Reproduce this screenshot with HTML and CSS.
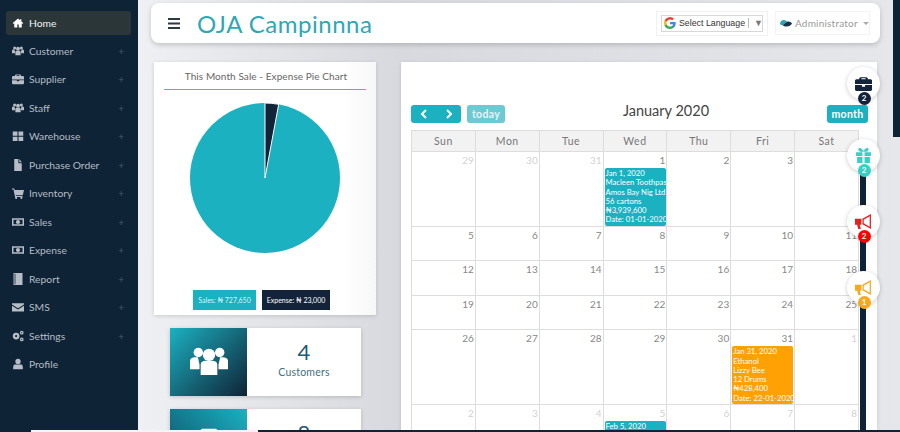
FILE: index.html
```html
<!DOCTYPE html>
<html lang="en">
<head>
    <meta charset="UTF-8">
    <meta name="viewport" content="width=device-width, initial-scale=1.0">
    <title>OJA Campinnna</title>
    <link rel="stylesheet" href="styles.css">
</head>
<body>
    <svg class="icon-defs" aria-hidden="true">
        <symbol id="i-home" viewBox="0 0 16 16"><path d="M8 2 1 8l1 1.200 1-.8V14h4v-4h2v4h4V8.400l1 .8L15 8l-2.500-2.100V3h-2v1.200z"/></symbol>
        <symbol id="i-users" viewBox="0 0 16 16"><circle cx="3.500" cy="4" r="2"/><circle cx="12.500" cy="4" r="2"/><circle cx="8" cy="5" r="2.600"/><path d="M0 7.500c0-1 1-1.500 2-1.500h1.300L4 9v2H0zM16 7.500c0-1-1-1.500-2-1.500h-1.300L12 9v2h4zM4.500 9c0-1 1-1.500 2-1.500h3c1 0 2 .5 2 1.500v4.500h-7z"/></symbol>
        <symbol id="i-case" viewBox="0 0 16 16"><path d="M5 2h6l1 1v1h3l1 1v3.500H0V5l1-1h3V3zm1 1v1h4V3zM0 9.500h6.500V11h3V9.500H16V14l-1 1H1l-1-1z"/></symbol>
        <symbol id="i-grid" viewBox="0 0 16 16"><path d="M1 2h6.300v5.500H1zM8.700 2H15v5.500H8.700zM1 9h6.300v5.500H1zM8.700 9H15v5.500H8.700z"/></symbol>
        <symbol id="i-file" viewBox="0 0 16 16"><path d="M3 0h5.500v5.500H13V16H3zM9.800 0 13 4.200H9.800z"/></symbol>
        <symbol id="i-cart" viewBox="0 0 16 16"><path d="M0 2h3l.5 2H16l-1.500 6.500H5l.3 1.300H14v1.400H4L2 3.400H0z"/><circle cx="5.500" cy="14.500" r="1.400"/><circle cx="12.500" cy="14.500" r="1.400"/></symbol>
        <symbol id="i-money" viewBox="0 0 16 16"><path fill-rule="evenodd" d="M0 3h16v10H0zm2 2v6h12V5zM8 5.200a2.800 2.800 0 1 1 0 5.600 2.800 2.800 0 0 1 0-5.600z"/></symbol>
        <symbol id="i-book" viewBox="0 0 16 16"><path d="M2 0h12v16H2zM3.500 1v14h1V1z"/></symbol>
        <symbol id="i-mail" viewBox="0 0 16 16"><path d="M0 3h16v1.500L8 9.500 0 4.500zM0 6.300l8 5 8-5V14H0z"/></symbol>
        <symbol id="i-cogs" viewBox="0 0 16 16"><path fill-rule="evenodd" d="M5.500 3.500a4.500 4.500 0 1 1 0 9 4.500 4.500 0 0 1 0-9zm0 3a1.500 1.500 0 1 0 0 3 1.500 1.500 0 0 0 0-3zM13 1a2.500 2.500 0 1 1 0 5 2.500 2.500 0 0 1 0-5zm0 1.700a.8.800 0 1 0 0 1.600.8.800 0 0 0 0-1.600zM13 10a2.500 2.500 0 1 1 0 5 2.500 2.500 0 0 1 0-5zm0 1.700a.8.800 0 1 0 0 1.600.8.800 0 0 0 0-1.600z"/></symbol>
        <symbol id="i-user" viewBox="0 0 16 16"><circle cx="8" cy="4.500" r="3.500"/><path d="M3.500 8.500h9c1.500 0 2 2 2 6.500h-13c0-4.500.5-6.500 2-6.500z"/></symbol>
        <symbol id="i-gift" viewBox="0 0 16 16"><path d="M1 5h6v3.500H1zM9 5h6v3.500H9zM2 9.500h5V15H2zM9 9.500h5V15H9zM4 1c1.500-.5 3 1 4 3 1-2 2.500-3.500 4-3 1.500.7.800 3-1 3.500H5C3.200 4 2.500 1.700 4 1z"/></symbol>
        <symbol id="i-horn" viewBox="0 0 16 16"><path d="M0 5.500h6V11H4.500l1 4H3l-1-4H0zM7 5.500l8-4.500v14l-8-4.500zm1.200.8v3.400l5.600 3.200V3.100z"/></symbol>
    </svg>

    <aside class="sidebar">
        <ul class="side-menu">
            <li class="side-item active"><svg class="side-icon"><use href="#i-home"/></svg>Home</li>
            <li class="side-item"><svg class="side-icon"><use href="#i-users"/></svg>Customer<span class="plus">+</span></li>
            <li class="side-item"><svg class="side-icon"><use href="#i-case"/></svg>Supplier<span class="plus">+</span></li>
            <li class="side-item"><svg class="side-icon"><use href="#i-users"/></svg>Staff<span class="plus">+</span></li>
            <li class="side-item"><svg class="side-icon"><use href="#i-grid"/></svg>Warehouse<span class="plus">+</span></li>
            <li class="side-item"><svg class="side-icon"><use href="#i-file"/></svg>Purchase Order<span class="plus">+</span></li>
            <li class="side-item"><svg class="side-icon"><use href="#i-cart"/></svg>Inventory<span class="plus">+</span></li>
            <li class="side-item"><svg class="side-icon"><use href="#i-money"/></svg>Sales<span class="plus">+</span></li>
            <li class="side-item"><svg class="side-icon"><use href="#i-money"/></svg>Expense<span class="plus">+</span></li>
            <li class="side-item"><svg class="side-icon"><use href="#i-book"/></svg>Report<span class="plus">+</span></li>
            <li class="side-item"><svg class="side-icon"><use href="#i-mail"/></svg>SMS<span class="plus">+</span></li>
            <li class="side-item"><svg class="side-icon"><use href="#i-cogs"/></svg>Settings<span class="plus">+</span></li>
            <li class="side-item"><svg class="side-icon"><use href="#i-user"/></svg>Profile</li>
        </ul>
    </aside>

    <main class="main">
        <header class="topbar">
            <svg class="burger" viewBox="0 0 12 11"><path d="M0 0h12v2H0zM0 4.500h12v2H0zM0 9h12v2H0z"/></svg>
            <div class="brand">OJA Campinnna</div>
            <div class="lang-box">
                <div class="lang-select">
                    <svg class="g-logo" viewBox="0 0 18 18">
                        <path fill="#4285f4" d="M17.600 9.200c0-.6-.1-1.200-.2-1.800H9v3.400h4.800a4.100 4.100 0 0 1-1.800 2.700v2.200h2.900c1.700-1.600 2.700-3.900 2.700-6.500z"/>
                        <path fill="#34a853" d="M9 18c2.400 0 4.500-.8 5.900-2.200L12 13.500c-.8.500-1.800.9-3 .9-2.300 0-4.300-1.600-5-3.700H1v2.300A9 9 0 0 0 9 18z"/>
                        <path fill="#fbbc05" d="M4 10.700a5.400 5.400 0 0 1 0-3.400V5H1a9 9 0 0 0 0 8z"/>
                        <path fill="#ea4335" d="M9 3.600c1.300 0 2.500.5 3.400 1.300L15 2.400A9 9 0 0 0 1 5l3 2.300c.7-2.100 2.700-3.700 5-3.700z"/>
                    </svg>
                    <span class="lang-text">Select Language</span>
                    <span class="lang-arrow">▼</span>
                </div>
            </div>
            <div class="user-box">
                <svg class="user-logo" viewBox="0 0 14 9"><path fill="#2aa7b3" d="M0 5c0-2 2-4 4.500-4C6 1 7.500 2 8 3L3 7C1 7 0 6 0 5z"/><path fill="#17324a" d="M8 3c2-1 5 0 6 2-1 2-4 3.500-6 3.500-2 0-4-.5-5-1.500z"/></svg>
                <span>Administrator</span>
                <span class="caret"></span>
            </div>
        </header>

        <div class="content">
            <div class="left-col">
                <section class="pie-card">
                    <h2 class="pie-title">This Month Sale - Expense Pie Chart</h2>
                    <svg class="pie" viewBox="0 0 150 150">
                        <circle cx="75" cy="75" r="75" fill="#1bb1c1"/>
                        <path d="M75 75 75 0A75 75 0 0 1 88.700 1.300z" fill="#13233a" stroke="#fff" stroke-width="1"/>
                    </svg>
                    <div class="legend">
                        <span class="legend-item sales">Sales: ₦ 727,650</span>
                        <span class="legend-item expense">Expense: ₦ 23,000</span>
                    </div>
                </section>

                <section class="stat-card">
                    <div class="stat-icon"><svg class="stat-svg"><use href="#i-users"/></svg></div>
                    <div class="stat-body">
                        <div class="stat-num">4</div>
                        <div class="stat-label">Customers</div>
                    </div>
                </section>
                <section class="stat-card">
                    <div class="stat-icon flip"><svg class="stat-svg"><use href="#i-case"/></svg></div>
                    <div class="stat-body">
                        <div class="stat-num">8</div>
                        <div class="stat-label">Suppliers</div>
                    </div>
                </section>
            </div>

            <section class="cal-card">
                <div class="cal-toolbar">
                    <div class="btn-group">
                        <button class="cal-btn">
                            <svg class="chev" viewBox="0 0 8 10"><path d="M6 1 2 5l4 4"/></svg>
                        </button>
                        <button class="cal-btn">
                            <svg class="chev" viewBox="0 0 8 10"><path d="M2 1l4 4-4 4"/></svg>
                        </button>
                    </div>
                    <button class="cal-btn today">today</button>
                    <h2 class="cal-title">January 2020</h2>
                    <button class="cal-btn month">month</button>
                </div>

                <table class="calendar">
                    <thead>
                        <tr><th>Sun</th><th>Mon</th><th>Tue</th><th>Wed</th><th>Thu</th><th>Fri</th><th>Sat</th></tr>
                    </thead>
                    <tbody>
                        <tr class="tall">
                            <td class="dim">29</td><td class="dim">30</td><td class="dim">31</td>
                            <td>1
                                <div class="event teal">Jan 1, 2020<br>Macleen Toothpaste<br>Amos Bay Nig Ltd<br>56 cartons<br>₦3,939,600<br>Date: 01-01-2020</div>
                            </td>
                            <td>2</td><td>3</td><td>4</td>
                        </tr>
                        <tr><td>5</td><td>6</td><td>7</td><td>8</td><td>9</td><td>10</td><td>11</td></tr>
                        <tr><td>12</td><td>13</td><td>14</td><td>15</td><td>16</td><td>17</td><td>18</td></tr>
                        <tr><td>19</td><td>20</td><td>21</td><td>22</td><td>23</td><td>24</td><td>25</td></tr>
                        <tr class="tall">
                            <td>26</td><td>27</td><td>28</td><td>29</td><td>30</td>
                            <td>31
                                <div class="event orange">Jan 31, 2020<br>Ethanol<br>Lizzy Bee<br>12 Drums<br>₦428,400<br>Date: 22-01-2020</div>
                            </td>
                            <td class="dim">1</td>
                        </tr>
                        <tr class="tall">
                            <td class="dim">2</td><td class="dim">3</td><td class="dim">4</td>
                            <td class="dim">5
                                <div class="event teal">Feb 5, 2020</div>
                            </td>
                            <td class="dim">6</td><td class="dim">7</td><td class="dim">8</td>
                        </tr>
                    </tbody>
                </table>
            </section>
        </div>
    </main>

    <!-- 右側のタイムライン -->
    <div class="timeline">
        <div class="tl-node node-1"><svg class="tl-icon ink"><use href="#i-case"/></svg><span class="tl-badge bg-ink">2</span></div>
        <div class="tl-node node-2"><svg class="tl-icon aqua"><use href="#i-gift"/></svg><span class="tl-badge bg-aqua">2</span></div>
        <div class="tl-node node-3"><svg class="tl-icon red"><use href="#i-horn"/></svg><span class="tl-badge bg-red">2</span></div>
        <div class="tl-node node-4"><svg class="tl-icon amber"><use href="#i-horn"/></svg><span class="tl-badge bg-amber">1</span></div>
    </div>

    <div class="corner-strip"></div>
    <div class="bottom-line"></div>
</body>
</html>
```

FILE: styles.css
```css
* {
    box-sizing: border-box;
}
html, body {
    height: 432px;
}
body {
    margin: 0;
    display: flex;
    overflow: hidden;
    position: relative;
    font-family: "Lato", "Noto Sans", sans-serif;
    color: #555;
}
.icon-defs {
    display: none;
}

/* sidebar */
.sidebar {
    flex: 0 0 138px;
    background-color: #0f2336;
}
.side-menu {
    list-style: none;
    margin: 0;
    padding: 9px 7px 0 6px;
}
.side-item {
    height: 28.5px;
    display: flex;
    align-items: center;
    padding-left: 6px;
    padding-bottom: 2px;
    font-size: 10.3px;
    color: #b4bcc4;
    position: relative;
}
.side-item.active {
    height: 24px;
    margin: 2px 0 2.5px;
    padding-bottom: 1px;
    background-color: #2b3639;
    border-radius: 3px;
    color: #f2f4f5;
}
.side-icon {
    width: 12px;
    height: 12px;
    margin-right: 5px;
    fill: #b6bdc4;
    flex: none;
}
.active .side-icon {
    fill: #fff;
}
.plus {
    position: absolute;
    right: 7px;
    font-size: 10px;
    color: #4a5a69;
}

/* main */
.main {
    flex: 1;
    min-width: 0;
    padding: 3px 20px 0 13px;
    background: linear-gradient(90deg, #eef0f3 0, #d8d9de 260px, #e6e7eb 100%);
}
.topbar {
    height: 40px;
    background-color: #fff;
    border-radius: 8px;
    box-shadow: 0 2px 5px rgba(0,0,0,0.18);
    display: flex;
    align-items: center;
    padding: 0 10px 0 17px;
}
.burger {
    width: 12px;
    height: 11px;
    fill: #2d3a42;
    flex: none;
}
.brand {
    margin-left: 17px;
    font-size: 24px;
    letter-spacing: 0.5px;
    color: #2ea8b4;
    flex: 1;
}
.lang-box {
    width: 112px;
    height: 25px;
    border: 1px solid #f1f1f1;
    padding: 3px 4px;
}
.lang-select {
    height: 17px;
    border: 1px solid #d8d8d8;
    display: flex;
    align-items: center;
    padding-left: 2px;
    font-family: "Liberation Sans", sans-serif;
    font-size: 8.8px;
    color: #333;
}
.g-logo {
    width: 12px;
    height: 12px;
    margin-right: 3px;
    flex: none;
}
.lang-text {
    white-space: nowrap;
    padding-right: 3px;
    border-right: 1px solid #bbb;
}
.lang-arrow {
    font-size: 9px;
    color: #777;
    margin-left: 5px;
}
.user-box {
    width: 95px;
    height: 24px;
    margin-left: 7px;
    border: 1px solid #f3f3f3;
    display: flex;
    align-items: center;
    padding-left: 4px;
    font-size: 10px;
    letter-spacing: 0.2px;
    color: #9a9a9a;
}
.user-logo {
    width: 12px;
    height: 8px;
    margin-right: 3px;
    flex: none;
}
.caret {
    margin-left: 5px;
    border-top: 3px solid #aaa;
    border-left: 3px solid transparent;
    border-right: 3px solid transparent;
}
.content {
    display: flex;
    align-items: flex-start;
    margin: 19px 0 0 3px;
}

/* left column */
.left-col {
    flex: 0 0 222px;
    margin-right: 25px;
}
.pie-card {
    height: 253px;
    background: linear-gradient(90deg, #fff 85%, #f6f7f8 100%);
    box-shadow: 0 1px 4px rgba(0,0,0,0.15);
    padding: 0 10px;
}
.pie-title {
    margin: 0;
    height: 28px;
    line-height: 28px;
    padding-left: 2px;
    border-bottom: 1px solid #4fb8bc;
    text-align: center;
    font-size: 10px;
    font-weight: normal;
    letter-spacing: 0.08px;
    color: #666;
}
.pie {
    display: block;
    width: 150px;
    height: 150px;
    margin: 13px auto 0;
}
.legend {
    display: flex;
    justify-content: center;
    gap: 6px;
    margin-top: 37px;
    padding-right: 7px;
}
.legend-item {
    height: 20px;
    line-height: 20px;
    font-size: 7px;
    text-align: center;
    color: #fff;
}
.legend-item.sales {
    width: 63px;
    background-color: #1bb1c1;
    color: #d8f3f5;
}
.legend-item.expense {
    width: 68px;
    background-color: #13233a;
}
.stat-card {
    display: flex;
    width: 191px;
    height: 68px;
    margin: 13px 0 0 16px;
    background-color: #fff;
    box-shadow: 0 1px 4px rgba(0,0,0,0.18);
}
.stat-icon {
    flex: 0 0 77px;
    display: flex;
    align-items: center;
    justify-content: center;
    background: linear-gradient(135deg, #1bb1c1 0, #0f2336 100%);
}
.stat-icon.flip {
    background: linear-gradient(45deg, #0f4860 0, #1bb1c1 100%);
}
.stat-svg {
    width: 38px;
    height: 38px;
    fill: #fff;
}
.stat-body {
    flex: 1;
    text-align: center;
    padding-top: 11px;
}
.stat-num {
    font-size: 22px;
    line-height: 26px;
    color: #1f5a78;
}
.stat-label {
    font-size: 10.5px;
    line-height: 14px;
    margin-top: 0;
    letter-spacing: 0.2px;
    color: #3d7085;
}

/* calendar */
.cal-card {
    flex: 0 0 476px;
    height: 400px;
    background-color: #fff;
    box-shadow: 0 1px 4px rgba(0,0,0,0.12);
    padding: 43px 9px 0 10px;
}
.cal-toolbar {
    display: flex;
    align-items: center;
    height: 18px;
    margin-bottom: 7px;
}
.btn-group {
    display: flex;
    border-radius: 3px;
    overflow: hidden;
    margin-right: 6px;
}
.cal-btn {
    height: 18px;
    border: none;
    padding: 0;
    background-color: #1bb1c1;
    color: #fff;
    font-family: inherit;
    font-size: 10.500px;
    font-weight: bold;
    letter-spacing: 0.3px;
    border-radius: 3px;
}
.btn-group .cal-btn {
    width: 25px;
    border-radius: 0;
}
.chev {
    display: block;
    width: 8px;
    height: 10px;
    margin: 0 auto;
    fill: none;
    stroke: #fff;
    stroke-width: 2;
}
.cal-btn.today {
    width: 38px;
    background-color: #6ccad3;
    color: #e3f5f7;
}
.cal-btn.month {
    width: 41px;
}
.cal-title {
    flex: 1;
    margin: 0 0 8px;
    text-align: center;
    font-size: 14.500px;
    font-weight: normal;
    color: #444;
}
.calendar {
    table-layout: fixed;
    border-collapse: collapse;
    width: 448px;
}
.calendar th {
    height: 21px;
    border: 1px solid #ddd;
    background-color: #f2f2f2;
    font-size: 10.500px;
    font-weight: normal;
    letter-spacing: 0.5px;
    color: #777;
}
.calendar td {
    height: 34.500px;
    padding: 2px 1px 0 0;
    border: 1px solid #ddd;
    vertical-align: top;
    text-align: right;
    font-size: 10px;
    line-height: 12px;
    color: #888;
}
.calendar .tall td {
    height: 74.500px;
}
.calendar td.dim {
    color: #d2d2d2;
}
.event {
    width: 61px;
    margin: 2px 0 0 1px;
    padding: 1px 0 1px 1px;
    border-radius: 2px;
    overflow: hidden;
    white-space: nowrap;
    text-align: left;
    font-size: 7.7px;
    line-height: 9.300px;
    color: #fff;
}
.event.teal {
    background-color: #1bb1c1;
}
.event.orange {
    background-color: #ffa005;
}

/* overlays */
.timeline {
    position: absolute;
    left: 860px;
    top: 150px;
    bottom: 0;
    width: 6px;
    background-color: #0f2336;
}
.tl-node {
    position: absolute;
    left: -13px;
    width: 33px;
    height: 33px;
    border-radius: 50%;
    background-color: #fff;
    box-shadow: 0 1px 5px rgba(0,0,0,0.2);
    display: flex;
    align-items: center;
    justify-content: center;
}
.node-1 { top: -83px; }
.node-2 { top: -11px; }
.node-3 { top: 55px; }
.node-4 { top: 121px; }
.tl-icon {
    width: 17px;
    height: 17px;
}
.tl-badge {
    position: absolute;
    left: 10.500px;
    top: 25px;
    width: 13px;
    height: 13px;
    border-radius: 50%;
    text-align: center;
    font-size: 8px;
    font-weight: bold;
    line-height: 13px;
    color: #fff;
}
.ink { fill: #13233a; }
.aqua { fill: #38cfc4; }
.red { fill: #ee1c1c; }
.amber { fill: #f7a81b; }
.bg-ink { background-color: #13233a; }
.bg-aqua { background-color: #38cfc4; }
.bg-red { background-color: #f00; }
.bg-amber { background-color: #f7a81b; }
.corner-strip {
    position: absolute;
    right: 0;
    top: 0;
    width: 7px;
    height: 137px;
    background-color: #0f2336;
}
.bottom-line {
    position: absolute;
    left: 31px;
    right: 0;
    bottom: 0;
    height: 2px;
    background: linear-gradient(90deg, #f4f5f6 0, #f4f5f6 227px, #0f2336 227px);
}
```
